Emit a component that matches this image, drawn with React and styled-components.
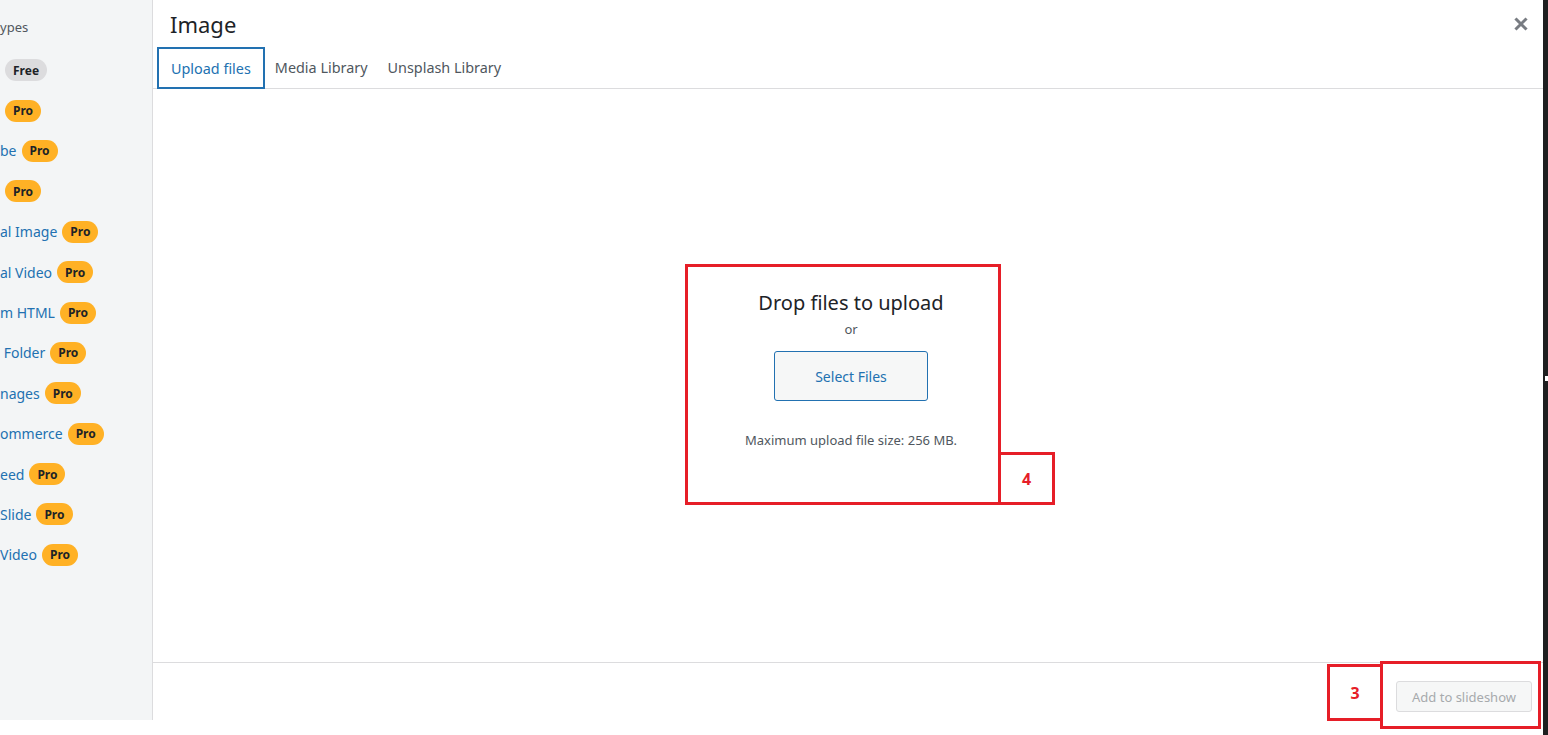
import React from 'react'
import styled, { createGlobalStyle } from 'styled-components'

const GlobalStyle = createGlobalStyle`
html, body {
  margin: 0;
  padding: 0;
  background: #fff;
}
body {
  font-family: "Noto Sans", "Open Sans", sans-serif;
  color: #1d2327;
}
`

const Page = styled.div`
display: flex;
width: 100%;
height: 100vh;
overflow: hidden;
`

const Sidebar = styled.aside`
width: 153px;
height: 720px;
flex-shrink: 0;
background: #f3f5f6;
border-right: 1px solid #dcdcde;
padding-top: 18px;
box-sizing: border-box;
overflow: hidden;
`

const SideHeading = styled.div`
font-size: 13px;
line-height: 18px;
color: #50575e;
`

const TypeList = styled.ul`
list-style: none;
margin: 14px 0 0;
padding: 0;
`

const TypeRow = styled.li`
display: flex;
align-items: center;
height: 40.4px;
white-space: nowrap;
`

const TypeName = styled.span`
font-size: 14px;
color: #2271b1;
`

const Badge = styled.span`
display: inline-flex;
align-items: center;
height: 22px;
padding: 0 8px;
margin-left: 5px;
border-radius: 11px;
font-size: 12px;
font-weight: 700;
color: #1d2327;
background: ${p => (p.$free ? '#dcdcde' : '#ffb125')};
`

const Modal = styled.main`
flex: 1;
display: flex;
flex-direction: column;
background: #fff;
min-width: 0;
`

const Header = styled.header`
height: 47px;
display: flex;
align-items: center;
justify-content: space-between;
padding: 0 15px 0 17px;
box-sizing: border-box;
`

const Title = styled.h1`
margin: 0;
font-size: 22px;
font-weight: 400;
color: #1d2327;
`

const CloseButton = styled.button`
border: none;
background: none;
padding: 0;
width: 14px;
height: 14px;
display: flex;
cursor: pointer;
color: #787c82;
`

const Tabs = styled.nav`
display: flex;
height: 42px;
padding-left: 4px;
border-bottom: 1px solid #dcdcde;
box-sizing: border-box;
`

const Tab = styled.button`
height: ${p => (p.$active ? '42px' : '41px')};
padding: 0 ${p => (p.$active ? '12px' : '10px')};
border: ${p => (p.$active ? '2px solid #2271b1' : 'none')};
background: none;
font-family: inherit;
font-size: 14.4px;
color: ${p => (p.$active ? '#2271b1' : '#50575e')};
box-sizing: border-box;
cursor: pointer;
`

const Body = styled.section`
flex: 1;
display: flex;
align-items: center;
justify-content: center;
`

const DropZone = styled.div`
position: relative;
width: 316px;
height: 241px;
margin: 18px 10px 0 0;
padding: 22px 0 0 16px;
box-sizing: border-box;
border: 3px solid #e61e28;
display: flex;
flex-direction: column;
align-items: center;
`

const DropTitle = styled.h2`
margin: 0;
font-size: 20px;
line-height: 28px;
font-weight: 400;
color: #1d2327;
`

const Small = styled.p`
margin: ${p => p.$gap || 0}px 0 0;
font-size: 13px;
line-height: 18px;
color: #50575e;
`

const SelectButton = styled.button`
margin-top: 13px;
width: 154px;
height: 50px;
border: 1px solid #2271b1;
border-radius: 3px;
background: #f6f7f7;
color: #2271b1;
font-family: inherit;
font-size: 14px;
cursor: pointer;
`

const Callout = styled.div`
position: absolute;
box-sizing: border-box;
border: 3px solid #e61e28;
display: flex;
align-items: center;
justify-content: center;
font-size: 16px;
font-weight: 700;
color: #e61e28;
background: #fff;
`

const DropCallout = styled(Callout)`
left: 100%;
bottom: -3px;
width: 57px;
height: 53px;
`

const Toolbar = styled.footer`
height: 73px;
border-top: 1px solid #dcdcde;
box-sizing: border-box;
display: flex;
justify-content: flex-end;
align-items: flex-start;
padding: 18px 11px 0 0;
`

const ButtonWrap = styled.div`
position: relative;
`

const AddButton = styled.button`
width: 136px;
height: 31px;
border: 1px solid #dcdcde;
border-radius: 3px;
background: #f6f7f7;
color: #a7aaad;
font-family: inherit;
font-size: 13px;
`

const Frame = styled.div`
position: absolute;
top: -20px;
left: -16px;
right: -9px;
bottom: -17px;
border: 3px solid #e61e28;
pointer-events: none;
`

const ToolbarCallout = styled(Callout)`
top: -17px;
left: -69px;
width: 56px;
height: 57px;
`

const Edge = styled.div`
width: 5px;
flex-shrink: 0;
background: #1e1f20;
display: flex;
flex-direction: column;
align-items: flex-end;
`

const EdgeTick = styled.div`
margin-top: 376px;
width: 3px;
height: 5px;
background: #fff;
`

const types = [
  { name: '', free: true },
  { name: '' },
  { name: 'be' },
  { name: '' },
  { name: 'al Image' },
  { name: 'al Video' },
  { name: 'm HTML' },
  { name: '\u00a0Folder' },
  { name: 'nages' },
  { name: 'ommerce' },
  { name: 'eed' },
  { name: 'Slide' },
  { name: 'Video' },
]

const CloseIcon = () => (
  <svg width="14" height="14" viewBox="0 0 14 14">
    <path d="M2.5 2.5 L11.5 11.5 M11.5 2.5 L2.5 11.5" stroke="currentColor" strokeWidth="3" strokeLinecap="square" />
  </svg>
)

const App = () => {
  return (
    <>
      <GlobalStyle />
      <Page>
        <Sidebar>
          <SideHeading>ypes</SideHeading>
          <TypeList>
            {types.map((t, i) => (
              <TypeRow key={i}>
                {t.name && <TypeName>{t.name}</TypeName>}
                <Badge $free={t.free}>{t.free ? 'Free' : 'Pro'}</Badge>
              </TypeRow>
            ))}
          </TypeList>
        </Sidebar>
        <Modal>
          <Header>
            <Title>Image</Title>
            <CloseButton aria-label="Close">
              <CloseIcon />
            </CloseButton>
          </Header>
          <Tabs>
            <Tab $active>Upload files</Tab>
            <Tab>Media Library</Tab>
            <Tab>Unsplash Library</Tab>
          </Tabs>
          <Body>
            <DropZone>
              <DropTitle>Drop files to upload</DropTitle>
              <Small $gap={3}>or</Small>
              <SelectButton>Select Files</SelectButton>
              <Small $gap={30}>Maximum upload file size: 256 MB.</Small>
              <DropCallout>4</DropCallout>
            </DropZone>
          </Body>
          <Toolbar>
            <ButtonWrap>
              <AddButton disabled>Add to slideshow</AddButton>
              <Frame />
              <ToolbarCallout>3</ToolbarCallout>
            </ButtonWrap>
          </Toolbar>
        </Modal>
        <Edge>
          <EdgeTick />
        </Edge>
      </Page>
    </>
  )
}

export default App
